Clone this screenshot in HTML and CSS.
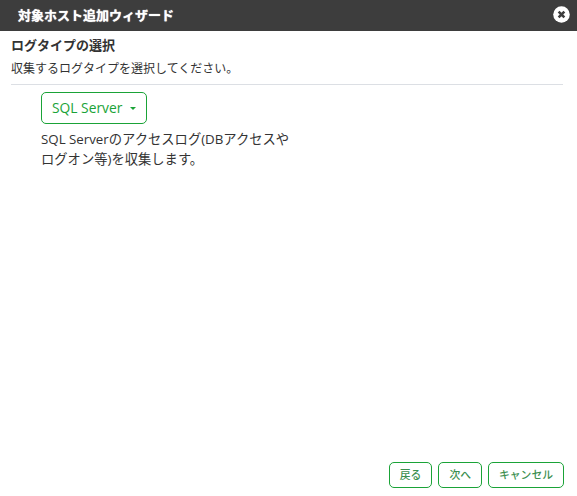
FILE: index.html
```html
<!DOCTYPE html>
<html lang="ja">
<head>
<meta charset="utf-8">
<title>対象ホスト追加ウィザード</title>
<link rel="stylesheet" href="styles.css">
</head>
<body>
<div class="dialog">
  <header class="titlebar">
    <span class="title">対象ホスト追加ウィザード</span>
    <button class="close" aria-label="閉じる">
      <svg viewBox="0 0 16 16" width="17" height="17"><circle cx="8" cy="8" r="7.8" fill="#fff"/><path d="M5.3 5.3l5.4 5.4M10.7 5.3l-5.4 5.4" stroke="#3d3d3d" stroke-width="2.4" fill="none"/></svg>
    </button>
  </header>
  <main class="content">
    <h2 class="heading">ログタイプの選択</h2>
    <p class="lead">収集するログタイプを選択してください。</p>
    <div class="body">
      <button class="dropdown">SQL Server<span class="caret"></span></button>
      <p class="desc">SQL Serverのアクセスログ(DBアクセスやログオン等)を収集します。</p>
    </div>
  </main>
  <footer class="actions">
    <button class="btn">戻る</button>
    <button class="btn">次へ</button>
    <button class="btn">キャンセル</button>
  </footer>
</div>
</body>
</html>
```
FILE: styles.css
```css
* { box-sizing: border-box; }
html, body { margin: 0; height: 100%; }
body {
  font-family: "Open Sans", "Noto Sans CJK JP", sans-serif;
  color: #333;
  background: #fff;
}
.dialog { display: flex; flex-direction: column; height: 496px; }
.titlebar {
  height: 31px;
  flex: none;
  background: #3d3d3d;
  display: flex;
  align-items: center;
  justify-content: space-between;
  padding: 0 7px 0 18px;
}
.title { color: #fff; font-size: 13px; font-weight: 700; line-height: 31px; text-shadow: 0 0 1px #fff; }
.close { border: 0; background: none; padding: 0; width: 17px; height: 17px; display: block; margin-top: -3px; cursor: pointer; }
.close svg { display: block; }
.content { flex: 1; padding: 0 14px 0 11px; }
.heading { margin: 5px 0 0; font-size: 13px; font-weight: 700; line-height: 18px; }
.lead { margin: 6px 0 0; font-size: 12px; line-height: 18px; padding-bottom: 6px; border-bottom: 1px solid #dcdfe4; }
.body { padding: 7px 0 0 30px; }
.dropdown {
  display: flex;
  align-items: center;
  width: 106px;
  height: 32px;
  padding: 0 0 0 10px;
  border: 1px solid #1aa337;
  border-radius: 5px;
  background: #fff;
  color: #1aa337;
  font: 400 13.8px/1 "Open Sans", "Noto Sans CJK JP", sans-serif;
}
.caret {
  margin-left: 8px;
  border: 3px solid transparent;
  border-top-color: #1aa337;
  border-bottom: 0;
  width: 6px; height: 3px;
}
.desc { margin: 5px 0 0; width: 260px; font-size: 13.3px; line-height: 20px; }
.actions { display: flex; justify-content: flex-end; gap: 6px; padding: 0 13px 8px 0; }
.btn {
  height: 26px;
  padding: 0 10px;
  border: 1px solid #1aa337;
  border-radius: 5px;
  background: #fff;
  color: #3c8f50;
  font: 500 10.8px/1 "Open Sans", "Noto Sans CJK JP", sans-serif;
}
```
